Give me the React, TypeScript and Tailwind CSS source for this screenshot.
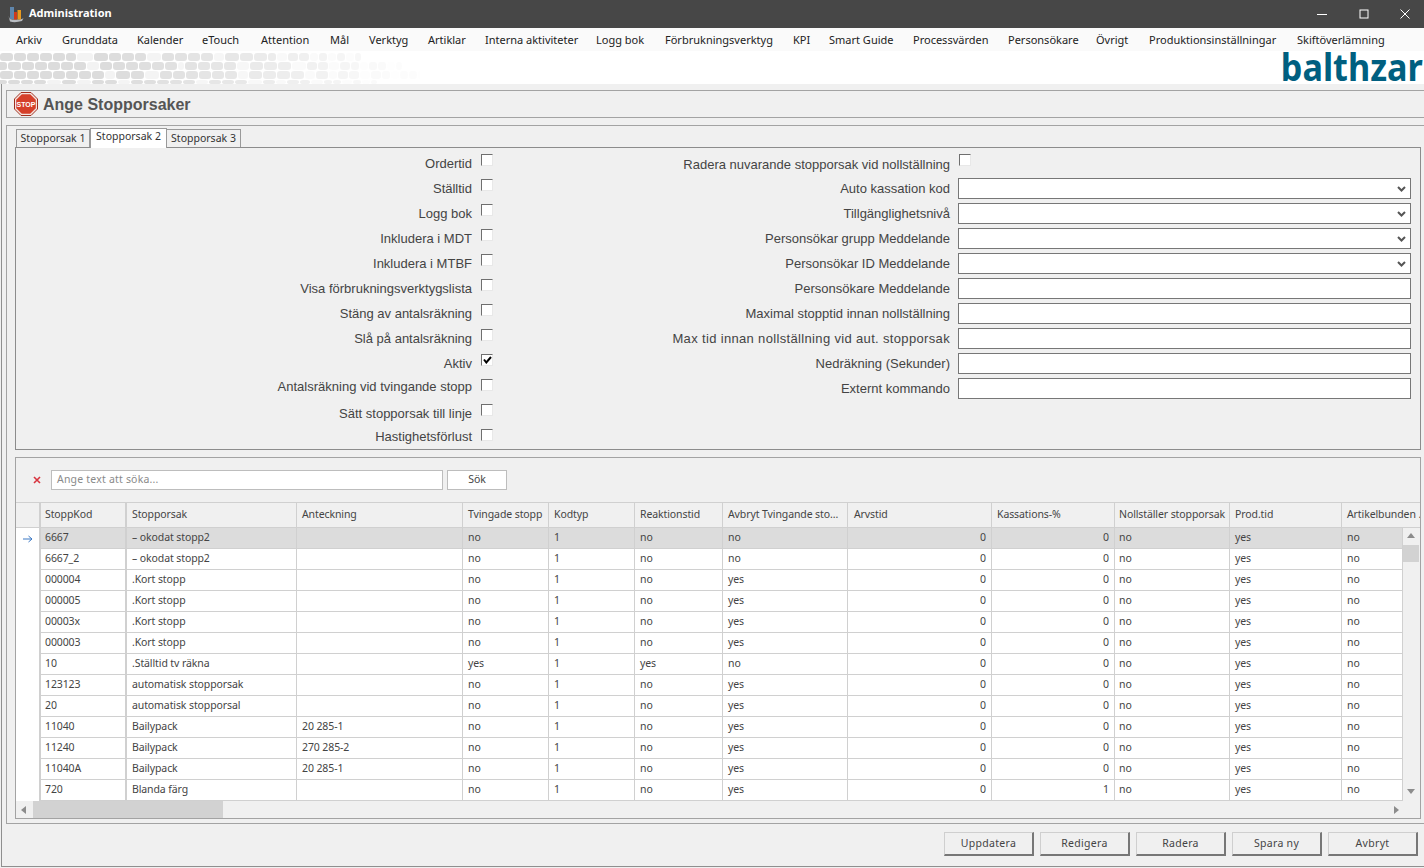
import React from "react";

const menus: [string, string][] = [
  ["Arkiv","w-[46px]"],["Grunddata","w-[75px]"],["Kalender","w-[65px]"],["eTouch","w-[59px]"],["Attention","w-[69px]"],["Mål","w-[39px]"],["Verktyg","w-[59px]"],["Artiklar","w-[57px]"],["Interna aktiviteter","w-[111px]"],["Logg bok","w-[69px]"],["Förbrukningsverktyg","w-[128px]"],["KPI","w-[36px]"],["Smart Guide","w-[84px]"],["Processvärden","w-[95px]"],["Personsökare","w-[88px]"],["Övrigt","w-[53px]"],["Produktionsinställningar","w-[148px]"],["Skiftöverlämning","w-[100px]"],
];

const leftRows: [string, boolean, string][] = [
  ["Ordertid", false, "pt-[2px]"],["Ställtid", false, "pt-[2px]"],["Logg bok", false, "pt-[2px]"],["Inkludera i MDT", false, "pt-[2px]"],
  ["Inkludera i MTBF", false, "pt-[2px]"],["Visa förbrukningsverktygslista", false, "pt-[2px]"],["Stäng av antalsräkning", false, "pt-[2px]"],["Slå på antalsräkning", false, "pt-[2px]"],
  ["Aktiv", true, "pt-[2px]"],["Antalsräkning vid tvingande stopp", false, "pt-0"],["Sätt stopporsak till linje", false, "pt-[2px]"],["Hastighetsförlust", false, "pt-0"],
];
const rightRows: [string, "s" | "i", string][] = [
  ["Auto kassation kod","s",""],["Tillgänglighetsnivå","s",""],["Personsökar grupp Meddelande","s",""],["Personsökar ID Meddelande","s",""],
  ["Personsökare Meddelande","i",""],["Maximal stopptid innan nollställning","i",""],["Max tid innan nollställning vid aut. stopporsak","i","tracking-[0.34px]"],["Nedräkning (Sekunder)","i",""],["Externt kommando","i",""],
];

const cols = ["w-[86px]","w-[170px]","w-[166px]","w-[86px]","w-[86px]","w-[88px]","w-[125px]","w-[144px]","w-[123px]","w-[115px]","w-[112px]","w-[61px]"];
const pads = ["pl-[4px]","pl-[5px]","pl-[5px]","pl-[5px]","pl-[5px]","pl-[5px]","pl-[5px]","pl-[6px]","pl-[5px]","pl-[4px]","pl-[5px]","pl-[5px]"];
const heads = ["StoppKod","Stopporsak","Anteckning","Tvingade stopp","Kodtyp","Reaktionstid","Avbryt Tvingande sto...","Arvstid","Kassations-%","Nollställer stopporsak","Prod.tid"];
const data: string[][] = [
  ["6667","– okodat stopp2","","no","1","no","no","0","0"],
  ["6667_2","– okodat stopp2","","no","1","no","no","0","0"],
  ["000004",".Kort stopp","","no","1","no","yes","0","0"],
  ["000005",".Kort stopp","","no","1","no","yes","0","0"],
  ["00003x",".Kort stopp","","no","1","no","yes","0","0"],
  ["000003",".Kort stopp","","no","1","no","yes","0","0"],
  ["10",".Ställtid tv räkna","","yes","1","yes","no","0","0"],
  ["123123","automatisk stopporsak","","no","1","no","yes","0","0"],
  ["20","automatisk stopporsal","","no","1","no","yes","0","0"],
  ["11040","Bailypack","20 285-1","no","1","no","yes","0","0"],
  ["11240","Bailypack","270 285-2","no","1","no","yes","0","0"],
  ["11040A","Bailypack","20 285-1","no","1","no","yes","0","0"],
  ["720","Blanda färg","","no","1","no","yes","0","1"],
];

const patternRows = [
  { y: 2, h: 8, w: [13,12,12,12,12,10,0,-16,14,12,12,11,-14,12,12,12,12,-10,14,13,13,0,8,-10,10,10,-8,8,-8,8,-8,6] },
  { y: 11, h: 8, w: [10,13,12,12,12,12,12,-12,12,12,12,12,12,12,-6,12,12,12,12,-12,13,13,13,-14,10,10,-10,10,8,-8,8,8,-8,6] },
  { y: 20, h: 8, w: [13,12,12,12,12,12,12,12,-10,14,13,-14,12,12,12,12,12,12,-10,13,13,13,13,-10,12,-8,10,10,-10,10,8,-8,8,8,-8,6] },
  { y: 29, h: 4, w: [10,12,12,12,-14,14,-14,12,12,-12,12,12,12,12,12,-12,12,12,12,-14,12,-10,12,10,-12,8,8,-10,8,-8,6] },
];

function Pattern() {
  const shapes: React.ReactNode[] = [];
  patternRows.forEach((r, ri) => {
    let x = ri % 2 ? -3 : 0;
    r.w.forEach((w, i) => {
      if (w !== 0) {
        const o = Math.max(0.08, 1 - Math.pow(Math.max(x - 90, 0) / 320, 1.3));
        const solid = w > 0;
        shapes.push(<rect key={ri + "-" + i} x={x} y={r.y} width={Math.abs(w)} height={r.h} rx="3" fill={solid ? "#dcdcdc" : "#f3f3f3"} opacity={o} />);
        x += Math.abs(w) + 1;
      }
    });
  });
  return <svg width="420" height="33" className="block">{shapes}</svg>;
}

function StopIcon() {
  return (
    <svg width="24" height="24" viewBox="0 0 24 24" className="block">
      <polygon points="7,0.5 17,0.5 23.5,7 23.5,17 17,23.5 7,23.5 0.5,17 0.5,7" fill="#f4e4e0" stroke="#a1301f" strokeWidth="1" />
      <polygon points="7.8,2.2 16.2,2.2 21.8,7.8 21.8,16.2 16.2,21.8 7.8,21.8 2.2,16.2 2.2,7.8" fill="#d5402a" />
      <text x="12" y="14.8" textAnchor="middle" fontSize="7" fontWeight="700" fill="#fff" fontFamily="Liberation Sans, sans-serif">STOP</text>
    </svg>
  );
}

function AppIcon() {
  return (
    <svg width="16" height="17" viewBox="0 0 16 17" className="block">
      <path d="M0.5 10 L2 13 Q6 14 14 13 L15.5 12 L14 15 Q7 17 2 15.5Z" fill="#b9bdc2" />
      <rect x="2" y="1" width="4" height="12" fill="#5f86ad" />
      <rect x="6" y="6" width="3" height="7.5" fill="#cf3a1c" />
      <rect x="9.5" y="4" width="3.5" height="9.5" fill="#e89a1f" />
    </svg>
  );
}

function Checkbox({ on }: { on: boolean }) {
  return (
    <div className="w-[12px] h-[12px] bg-white border border-t-[#6f6f6f] border-l-[#6f6f6f] border-r-[#e8e8e8] border-b-[#e8e8e8] flex items-center justify-center">
      {on && (
        <svg width="9" height="8" viewBox="0 0 9 8"><path d="M1 3.5 L3.3 6.5 L8 1" fill="none" stroke="#000" strokeWidth="2" /></svg>
      )}
    </div>
  );
}

function Chevron() {
  return (
    <svg width="9" height="6" viewBox="0 0 9 6" className="block"><path d="M1 1 L4.5 4.5 L8 1" fill="none" stroke="#555" strokeWidth="2" /></svg>
  );
}

function Tri({ d }: { d: "u" | "d" | "l" | "r" }) {
  const p = { u: "M0 5 L4 0 L8 5Z", d: "M0 0 L8 0 L4 5Z", l: "M5 0 L5 8 L0 4Z", r: "M0 0 L5 4 L0 8Z" }[d];
  return <svg width="8" height="8" viewBox="0 0 8 8" className="block"><path d={p} fill="#8c8c8c" /></svg>;
}

const grid = "[font-family:'Noto_Sans',sans-serif] text-[10.5px] tracking-[-0.1px] text-[#444]";

export default function App() {
  return (
    <div className="w-[1424px] h-[868px] overflow-hidden flex flex-col bg-[#f0f0f0] [font-family:'Liberation_Sans',sans-serif]">
      <div className="h-[28px] shrink-0 bg-[#474747] flex items-center pl-[8px] text-white">
        <AppIcon />
        <span className="ml-[5px] mb-[1px] text-[11px] font-bold [font-family:'Noto_Sans',sans-serif]">Administration</span>
        <div className="ml-auto flex items-center">
          <svg width="12" height="12" viewBox="0 0 12 12" className="mr-[30px]"><path d="M1 6.5 H11" stroke="#fff" strokeWidth="1" /></svg>
          <svg width="12" height="12" viewBox="0 0 12 12" className="mr-[29px]"><rect x="2" y="2" width="8" height="8" fill="none" stroke="#fff" strokeWidth="1" /></svg>
          <svg width="12" height="12" viewBox="0 0 12 12" className="mr-[13px]"><path d="M1.5 1.5 L10.5 10.5 M10.5 1.5 L1.5 10.5" stroke="#fff" strokeWidth="1" /></svg>
        </div>
      </div>

      <div className="h-[23px] shrink-0 bg-[#fafafa] flex items-center pl-[16px] pt-[1px] text-[11px] text-[#222] [font-family:'Noto_Sans',sans-serif] whitespace-nowrap">
        {menus.map(([m, w]) => <span key={m} className={w + " shrink-0"}>{m}</span>)}
      </div>

      <div className="h-[33px] shrink-0 bg-white flex justify-between overflow-hidden">
        <Pattern />
        <span className="text-[38px] leading-[31px] font-bold text-[#005f80] mr-[1px] origin-right scale-x-[0.9] [font-family:'Noto_Sans',sans-serif]">balthzar</span>
      </div>

      <div className="flex-1 ml-[1px] mb-[1px] border-l border-b border-[#8f8f8f] pl-[4px] pt-[6px] flex flex-col min-h-0">
        <div className="h-[28px] shrink-0 border border-r-0 border-[#a3a3a3] flex items-center pl-[7px] gap-[5px]">
          <StopIcon />
          <span className="text-[16px] font-bold text-[#555] pt-[2px]">Ange Stopporsaker</span>
        </div>

        <div className="mt-[7px] h-[699px] shrink-0 border border-r-0 border-[#a3a3a3] pl-[8px] pr-[3px] pt-[1px] flex flex-col">
          <div className="h-[20px] shrink-0 flex items-end pl-[1px] text-[10.5px] text-[#333] [font-family:'Noto_Sans',sans-serif]">
            <div className="w-[74px] h-[18px] border border-b-0 border-[#9a9a9a] flex items-center justify-center">Stopporsak 1</div>
            <div className="w-[77px] h-[20px] mb-[-1px] relative bg-white border border-b-0 border-[#9a9a9a] flex items-center justify-center pb-[3px]">Stopporsak 2</div>
            <div className="w-[74px] h-[18px] border border-b-0 border-l-0 border-[#9a9a9a] flex items-center justify-center">Stopporsak 3</div>
          </div>

          <div className="h-[303px] shrink-0 border border-[#8c8c8c] flex text-[13px] text-[#444]">
            <div className="w-[482px] shrink-0 pt-[4px] flex flex-col">
              {leftRows.map(([l, on, pad]) => (
                <div key={l} className="h-[25px] shrink-0 flex">
                  <div className={"w-[456px] text-right whitespace-nowrap " + pad}>{l}</div>
                  <div className="ml-[9px] pt-[2px]"><Checkbox on={on} /></div>
                </div>
              ))}
            </div>
            <div className="flex-1 pt-[4px] flex flex-col">
              <div className="h-[26px] shrink-0 flex">
                <div className="w-[452px] text-right pt-[3px] whitespace-nowrap">Radera nuvarande stopporsak vid nollställning</div>
                <div className="ml-[9px] pt-[2px]"><Checkbox on={false} /></div>
              </div>
              {rightRows.map(([l, t, tr]) => (
                <div key={l} className="h-[25px] shrink-0 flex">
                  <div className={"w-[452px] text-right whitespace-nowrap pt-[1px] " + tr}>{l}</div>
                  <div className="ml-[8px] w-[453px] h-[21px] bg-white border border-[#777] flex items-center justify-end pr-[4px]">
                    {t === "s" && <Chevron />}
                  </div>
                </div>
              ))}
            </div>
          </div>

          <div className="mt-[7px] h-[362px] shrink-0 border border-[#a3a3a3] flex flex-col">
            <div className="h-[44px] shrink-0 flex items-center pl-[17px]">
              <svg width="8" height="8" viewBox="0 0 8 8"><path d="M1 1 L7 7 M7 1 L1 7" stroke="#d8343f" strokeWidth="1.6" /></svg>
              <div className="ml-[10px] w-[392px] h-[20px] bg-white border border-[#bdbdbd] flex items-center pl-[5px] text-[10.5px] tracking-[0.2px] text-[#8a8a8a] [font-family:'Noto_Sans',sans-serif]">Ange text att söka...</div>
              <div className={"ml-[4px] w-[60px] h-[20px] bg-white border border-[#bdbdbd] flex items-center justify-center " + grid}>Sök</div>
            </div>

            <div className={"h-[26px] shrink-0 flex border-t border-b border-[#d0d0d0] bg-[#f0f0f0] whitespace-nowrap overflow-hidden " + grid}>
              <div className="w-[25px] shrink-0 border-r-2 border-[#d0d0d0]" />
              {heads.map((h, i) => (
                <div key={h} className={cols[i] + " " + pads[i] + " shrink-0 flex items-center overflow-hidden " + (i === 0 ? "border-r-2 border-[#d0d0d0]" : "border-r border-[#d0d0d0]")}>{h}</div>
              ))}
              <div className="flex-1 pl-[5px] flex items-center">Artikelbunden ..</div>
            </div>

            <div className="flex-1 flex min-h-0">
              <div className={"w-[1387px] shrink-0 overflow-hidden bg-white " + grid}>
                {data.map((r, ri) => {
                  const cells = [...r, "no", "yes", "no"];
                  return (
                    <div key={r[0]} className="h-[21px] flex whitespace-nowrap">
                      <div className="w-[25px] shrink-0 border-r-2 border-[#d0d0d0] flex items-center justify-center">
                        {ri === 0 && (
                          <svg width="10" height="8" viewBox="0 0 10 8"><path d="M0 4 H9 M5.5 1 L9 4 L5.5 7" fill="none" stroke="#3b78c4" strokeWidth="1" /></svg>
                        )}
                      </div>
                      {cells.map((c, i) => (
                        <div key={i} className={cols[i] + " " + pads[i] + " shrink-0 flex items-center pr-[5px] border-b border-[#d0d0d0] overflow-hidden " + (i === 0 ? "border-r-2 border-r-[#d0d0d0] " : "border-r border-r-[#d0d0d0] ") + (i === 7 || i === 8 ? "justify-end " : "") + (ri === 0 ? "bg-[#dcdcdc]" : "bg-white")}>{c}</div>
                      ))}
                    </div>
                  );
                })}
              </div>
              <div className="w-[16px] shrink-0 bg-[#f0f0f0] flex flex-col items-center">
                <div className="h-[17px] flex items-center"><Tri d="u" /></div>
                <div className="w-full h-[17px] bg-[#d2d2d2]" />
                <div className="mt-auto h-[17px] flex items-center"><Tri d="d" /></div>
              </div>
            </div>

            <div className="h-[17px] shrink-0 bg-[#f0f0f0] flex items-center">
              <div className="w-[17px] shrink-0 flex justify-center"><Tri d="l" /></div>
              <div className="w-[190px] h-full bg-[#d2d2d2]" />
              <div className="ml-auto mr-[18px]"><Tri d="r" /></div>
            </div>
          </div>
        </div>

        <div className="flex-1 pt-[8px] pr-[6px] flex justify-end gap-[6px] text-[10.5px] text-[#444] tracking-[0.3px] [font-family:'Noto_Sans',sans-serif]">
          {["Uppdatera","Redigera","Radera","Spara ny","Avbryt"].map((b) => (
            <div key={b} className="w-[90px] h-[24px] bg-[#f0f0f0] border border-[#cfcfcf] border-r-2 border-b-2 border-r-[#777] border-b-[#777] flex items-center justify-center">{b}</div>
          ))}
        </div>
      </div>
    </div>
  );
}
